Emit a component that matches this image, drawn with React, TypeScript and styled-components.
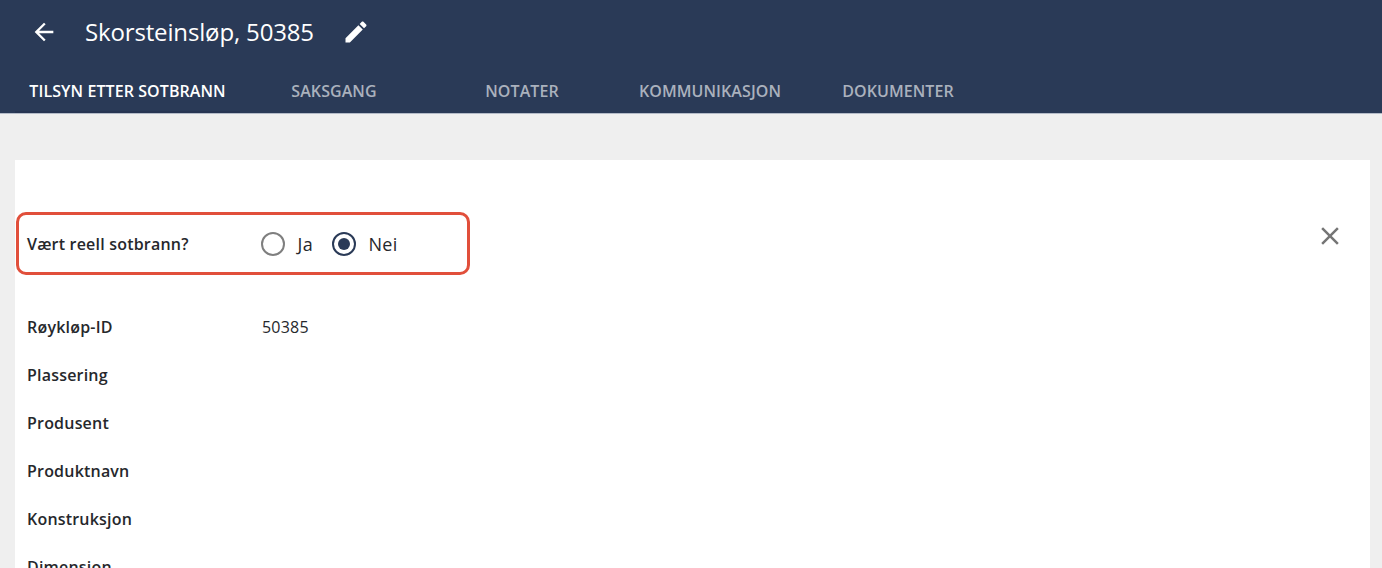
import styled, { createGlobalStyle } from 'styled-components';

const GlobalStyle = createGlobalStyle`
  html, body {
    margin: 0;
    height: 100%;
    overflow: hidden;
    background: #efefef;
    font-family: "Open Sans", "Liberation Sans", sans-serif;
    color: #26282c;
  }
`;

const Header = styled.header`
  height: 113px;
  background: #2a3a57;
  border-bottom: 1px solid #b4bbc8;
`;

const TitleBar = styled.div`
  height: 64px;
  display: flex;
  align-items: center;
  padding-left: 30px;
  color: #fff;
`;

const Title = styled.h1`
  margin: 0 28px 0 27px;
  font-size: 24px;
  font-weight: 500;
  letter-spacing: -0.15px;
  line-height: 30px;
`;

const Icon = styled.svg<{ $size?: number }>`
  width: ${p => p.$size ?? 28}px;
  height: ${p => p.$size ?? 28}px;
  fill: currentColor;
  display: block;
  flex: none;
`;

const Tabs = styled.nav`
  height: 49px;
  display: flex;
  padding-left: 15px;
`;

const Tab = styled.a<{ $active?: boolean }>`
  width: ${p => (p.$active ? '225px' : '188px')};
  height: 49px;
  box-sizing: border-box;
  padding-top: 6px;
  display: flex;
  align-items: center;
  justify-content: center;
  font-size: 16px;
  font-weight: 600;
  letter-spacing: 0.08px;
  color: ${p => (p.$active ? '#fff' : '#aab1bd')};
  border-bottom: 2px solid ${p => (p.$active ? '#273552' : 'transparent')};
`;

const Card = styled.main`
  margin: 46px 12px 0 15px;
  height: 408px;
  box-sizing: border-box;
  overflow: hidden;
  background: #fff;
  padding-top: 52px;
`;

const TopRow = styled.div`
  display: flex;
  justify-content: space-between;
  align-items: center;
  padding: 0 25px 0 1px;
`;

const Highlight = styled.div`
  width: 454px;
  height: 63px;
  box-sizing: border-box;
  border: 3px solid #e14f3b;
  border-radius: 10px;
  display: flex;
  align-items: center;
  padding-left: 8px;
`;

const Label = styled.div`
  width: 234px;
  flex: none;
  font-size: 16px;
  font-weight: 600;
  letter-spacing: 0.2px;
  line-height: 22px;
`;

const RadioGroup = styled.div`
  display: flex;
  align-items: center;
  gap: 19px;
`;

const RadioOption = styled.label`
  display: flex;
  align-items: center;
  gap: 12.5px;
  font-size: 18px;
  letter-spacing: 0.3px;
  line-height: 24px;
`;

const RadioCircle = styled.span<{ $checked?: boolean }>`
  width: 24px;
  height: 24px;
  box-sizing: border-box;
  border-radius: 50%;
  border: 2px solid ${p => (p.$checked ? '#2a3a57' : '#7f7f7f')};
  display: flex;
  align-items: center;
  justify-content: center;

  &::after {
    content: '';
    display: ${p => (p.$checked ? 'block' : 'none')};
    width: 12px;
    height: 12px;
    border-radius: 50%;
    background: #2a3a57;
  }
`;

const CloseButton = styled.span`
  color: #757575;
  margin-top: -16px;
`;

const Fields = styled.dl`
  margin: 28px 0 0;
  padding-left: 12px;
`;

const FieldRow = styled.div`
  height: 48px;
  display: flex;
  align-items: center;
`;

const FieldName = styled.dt`
  width: 235px;
  flex: none;
  font-size: 16px;
  font-weight: 600;
  letter-spacing: 0.2px;
`;

const FieldValue = styled.dd`
  margin: 0;
  font-size: 16px;
  letter-spacing: 0.2px;
`;

const fields: [string, string][] = [
  ['Røykløp-ID', '50385'],
  ['Plassering', ''],
  ['Produsent', ''],
  ['Produktnavn', ''],
  ['Konstruksjon', ''],
  ['Dimensjon', ''],
];

export default function App() {
  return (
    <>
      <GlobalStyle />
      <Header>
        <TitleBar>
          <Icon viewBox="0 0 24 24">
            <path d="M20 11H7.83l5.59-5.59L12 4l-8 8 8 8 1.41-1.41L7.83 13H20v-2z" />
          </Icon>
          <Title>Skorsteinsløp, 50385</Title>
          <Icon viewBox="0 0 24 24">
            <path d="M3 17.25V21h3.75L17.81 9.94l-3.75-3.75L3 17.25zM20.71 7.04c.39-.39.39-1.02 0-1.41l-2.34-2.34c-.39-.39-1.02-.39-1.41 0l-1.83 1.83 3.75 3.75 1.83-1.83z" />
          </Icon>
        </TitleBar>
        <Tabs>
          <Tab $active>TILSYN ETTER SOTBRANN</Tab>
          <Tab>SAKSGANG</Tab>
          <Tab>NOTATER</Tab>
          <Tab>KOMMUNIKASJON</Tab>
          <Tab>DOKUMENTER</Tab>
        </Tabs>
      </Header>
      <Card>
        <TopRow>
          <Highlight>
            <Label>Vært reell sotbrann?</Label>
            <RadioGroup>
              <RadioOption>
                <RadioCircle />
                Ja
              </RadioOption>
              <RadioOption>
                <RadioCircle $checked />
                Nei
              </RadioOption>
            </RadioGroup>
          </Highlight>
          <CloseButton>
            <Icon $size={30} viewBox="0 0 24 24">
              <path d="M19 6.41L17.59 5 12 10.59 6.41 5 5 6.41 10.59 12 5 17.59 6.41 19 12 13.41 17.59 19 19 17.59 13.41 12z" />
            </Icon>
          </CloseButton>
        </TopRow>
        <Fields>
          {fields.map(([name, value]) => (
            <FieldRow key={name}>
              <FieldName>{name}</FieldName>
              <FieldValue>{value}</FieldValue>
            </FieldRow>
          ))}
        </Fields>
      </Card>
    </>
  );
}
